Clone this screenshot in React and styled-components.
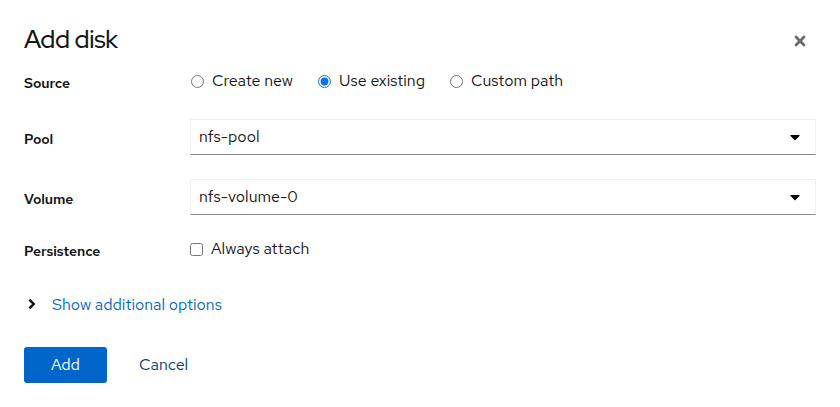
import React from "react";
import styled, { createGlobalStyle } from "styled-components";
import { FaTimes, FaAngleRight, FaCaretDown } from "react-icons/fa";

const GlobalStyle = createGlobalStyle`
  *, *::before, *::after { box-sizing: border-box; }
  body {
    margin: 0;
    background: #fff;
    color: #151515;
    font-family: "Red Hat Text", Lato, "Open Sans", sans-serif;
    font-size: 16px;
    line-height: 24px;
  }
  button, input { font: inherit; margin: 0; }
`;

const Modal = styled.main`
  width: 840px;
  height: 407px;
  padding: 24px 24px 0;
  display: flex;
  flex-direction: column;
`;

const Header = styled.header`
  display: flex;
  justify-content: space-between;
  height: 45px;
`;

const Title = styled.h1`
  margin: 0;
  font-family: "Red Hat Display", "Red Hat Text", Lato, sans-serif;
  font-size: 25px;
  line-height: 32px;
  font-weight: 500;
  letter-spacing: -0.3px;
`;

const CloseButton = styled.button`
  display: flex;
  align-items: center;
  justify-content: center;
  width: 32px;
  height: 34px;
  padding: 0;
  border: 0;
  background: none;
  color: #6a6e73;
`;

const Field = styled.div`
  display: grid;
  grid-template-columns: 166px 1fr;
  height: ${(p) => p.$height}px;
  margin-bottom: ${(p) => p.$gap}px;
`;

const Label = styled.span`
  padding-top: ${(p) => p.$top}px;
  font-size: 14px;
  line-height: 20px;
  font-weight: 600;
  letter-spacing: -0.1px;
`;

const Options = styled.div`
  display: flex;
  align-items: flex-start;
  padding-left: ${(p) => p.$inset || 0}px;
`;

const Option = styled.label`
  display: flex;
  align-items: center;
  height: 24px;
  gap: 8px;
  width: ${(p) => p.$width}px;
  white-space: nowrap;
`;

const Choice = styled.input`
  width: 13px;
  height: 13px;
  flex: none;
`;

const SelectToggle = styled.button`
  display: flex;
  align-items: center;
  justify-content: space-between;
  height: 36px;
  padding: 0 15px 1px 8px;
  border: 1px solid #f0f0f0;
  border-bottom-color: #8a8d90;
  background: #fff;
  color: #151515;
  text-align: left;
`;

const Caret = styled(FaCaretDown)`
  width: 10px;
  height: 16px;
  color: #000;
`;

const Expander = styled.button`
  display: flex;
  align-items: center;
  align-self: flex-start;
  height: 24px;
  padding: 0;
  border: 0;
  background: none;
  color: #06c;
`;

const ExpanderIcon = styled(FaAngleRight)`
  width: 16px;
  height: 16px;
  margin: 0 12px 2px 0;
  color: #151515;
`;

const Footer = styled.footer`
  display: flex;
  margin-top: 30px;
  gap: 16px;
`;

const Button = styled.button`
  height: 36px;
  width: ${(p) => p.$width}px;
  padding: 0;
  border: 0;
  border-radius: 3px;
  background: ${(p) => (p.$primary ? "#06c" : "transparent")};
  color: ${(p) => (p.$primary ? "#fff" : "#004080")};
`;

export default function App() {
  return (
    <>
      <GlobalStyle />
      <Modal>
        <Header>
          <Title>Add disk</Title>
          <CloseButton aria-label="Close"><FaTimes size={16} /></CloseButton>
        </Header>
        <Field $height={24} $gap={26}>
          <Label $top={4}>Source</Label>
          <Options $inset={1}>
            <Option $width={127}><Choice type="radio" name="source" />Create new</Option>
            <Option $width={132}><Choice type="radio" name="source" defaultChecked />Use existing</Option>
            <Option $width={130}><Choice type="radio" name="source" />Custom path</Option>
          </Options>
        </Field>
        <Field $height={36} $gap={24}>
          <Label $top={10}>Pool</Label>
          <SelectToggle>nfs-pool<Caret /></SelectToggle>
        </Field>
        <Field $height={36} $gap={22}>
          <Label $top={10}>Volume</Label>
          <SelectToggle>nfs-volume-0<Caret /></SelectToggle>
        </Field>
        <Field $height={24} $gap={32}>
          <Label $top={4}>Persistence</Label>
          <Options>
            <Option $width={130}><Choice type="checkbox" />Always attach</Option>
          </Options>
        </Field>
        <Expander><ExpanderIcon />Show additional options</Expander>
        <Footer>
          <Button $primary $width={83}>Add</Button>
          <Button $width={81}>Cancel</Button>
        </Footer>
      </Modal>
    </>
  );
}
